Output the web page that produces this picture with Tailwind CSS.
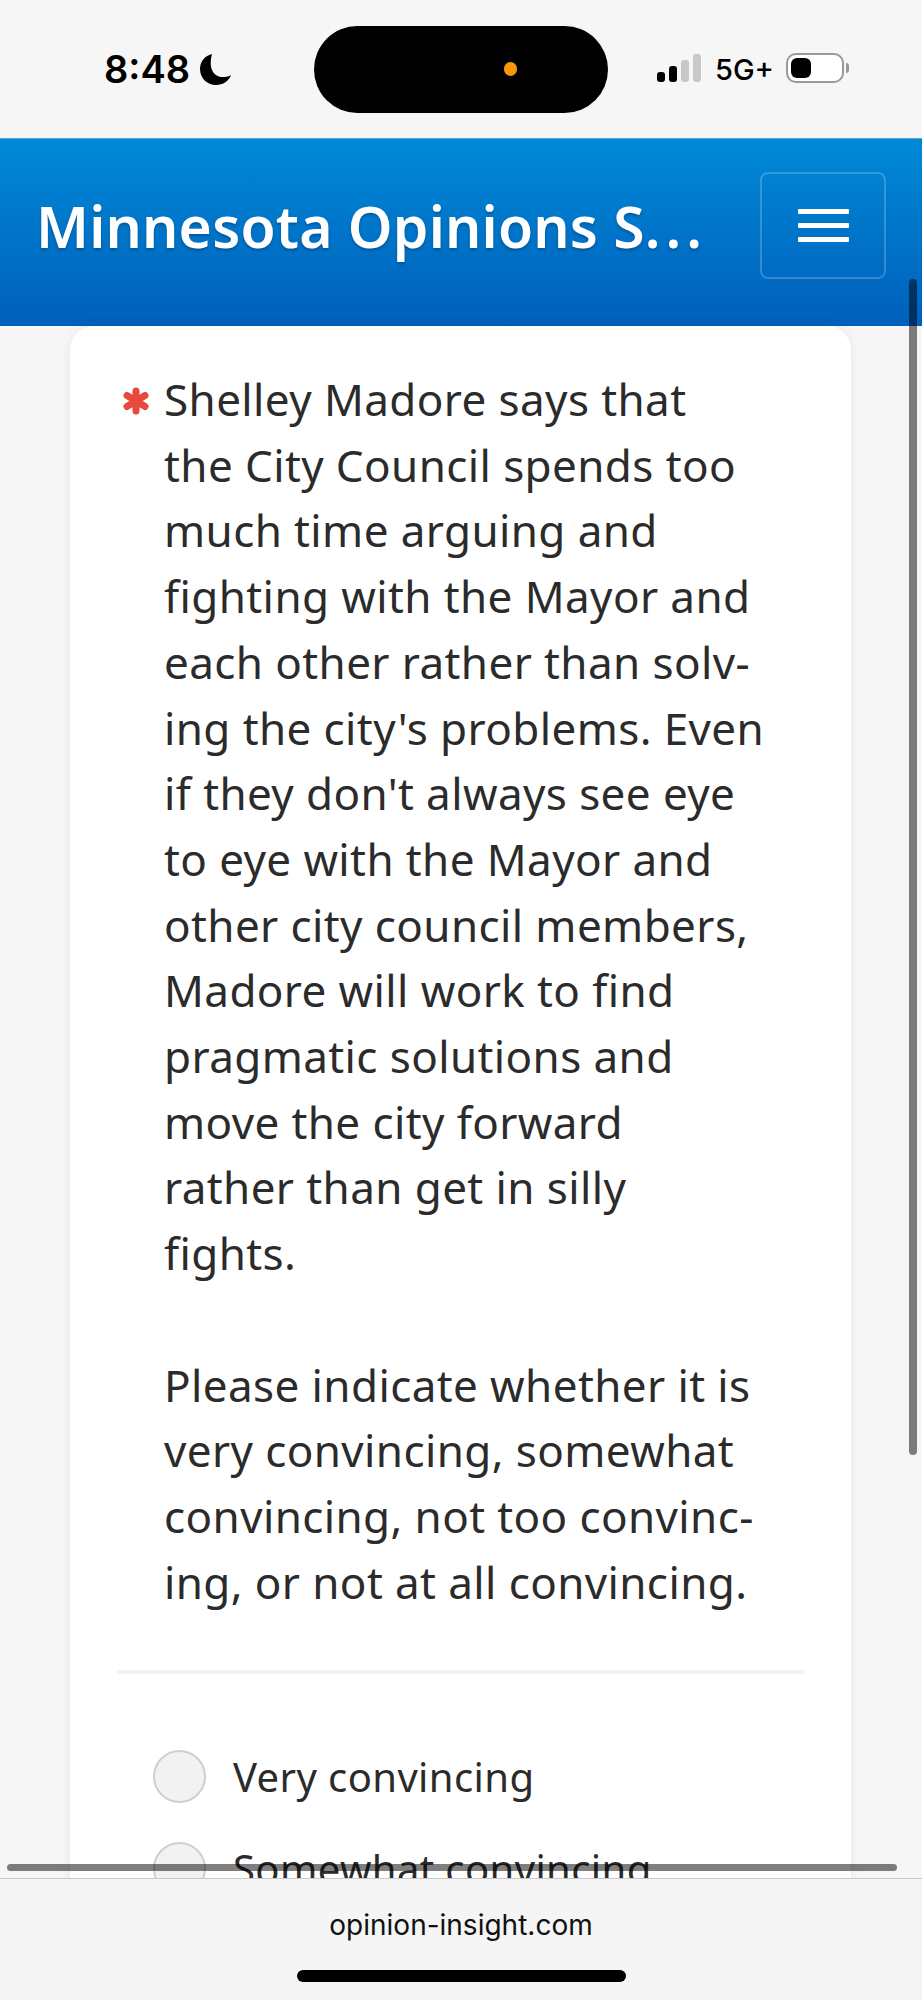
<!DOCTYPE html>
<html lang="en">
<head>
  <meta charset="UTF-8" />
  <title>Minnesota Opinions Survey</title>
  <script src="https://cdn.jsdelivr.net/npm/@tailwindcss/browser@4"></script>
</head>
<body class="bg-[#f6f6f6]">
  <div class="relative w-[922px] h-[2000px] overflow-hidden bg-[#f6f6f6] font-['Noto_Sans',sans-serif]">

    <!-- Status bar -->
    <div class="relative h-[138px] font-['Inter',sans-serif] text-black">
      <div class="absolute left-[104px] top-[46px] text-[38px] leading-[46px] font-semibold">8:48</div>
      <svg class="absolute left-[199px] top-[53px]" width="34" height="33" viewBox="0 0 34 33"><path d="M13 1C5 3 1 9 1 16c0 9 7 16 16 16 7 0 13-4 15-10-3 2-6 2-8 2C15 24 9 16 13 1z" fill="#000"/></svg>
      <div class="absolute left-[314px] top-[26px] w-[294px] h-[87px] rounded-full bg-black"></div>
      <div class="absolute left-[504px] top-[62px] w-[13px] h-[14px] rounded-full bg-[#f7950c]"></div>
      <div class="absolute left-[657px] top-[54px] h-[28px] flex items-end gap-[4px]">
        <div class="w-[8px] h-[10px] rounded-[3px] bg-black"></div>
        <div class="w-[8px] h-[16px] rounded-[3px] bg-black"></div>
        <div class="w-[8px] h-[22px] rounded-[3px] bg-[#c8c8c8]"></div>
        <div class="w-[8px] h-[28px] rounded-[3px] bg-[#c8c8c8]"></div>
      </div>
      <div class="absolute left-[715px] top-[52px] text-[29px] leading-[36px] font-medium">5G+</div>
      <div class="absolute left-[786px] top-[53px] w-[58px] h-[30px] rounded-[10px] border-[2px] border-[#999] bg-white p-[3px]">
        <div class="w-[20px] h-full rounded-[6px] bg-black"></div>
      </div>
      <div class="absolute left-[846px] top-[63px] w-[3px] h-[10px] rounded-r-full bg-[#999]"></div>
    </div>

    <!-- Header -->
    <header class="h-[188px] flex items-center justify-between pl-[36px] pr-[36px] pb-[14px] bg-gradient-to-b from-[#0089d8] to-[#0060bb] border-t border-t-[#4ba6dc]">
      <h1 class="mt-[2px] text-[57px] tracking-[0.2px] font-semibold text-white [text-shadow:0_2px_3px_rgba(0,0,0,0.25)] whitespace-nowrap">Minnesota Opinions S<span class="tracking-[5px]">...</span></h1>
      <button class="w-[126px] h-[107px] rounded-[8px] border-[2px] border-white/20 flex flex-col items-center justify-center gap-[9px]">
        <span class="block w-[51px] h-[5px] rounded-[1px] bg-white"></span>
        <span class="block w-[51px] h-[5px] rounded-[1px] bg-white"></span>
        <span class="block w-[51px] h-[5px] rounded-[1px] bg-white"></span>
      </button>
    </header>

    <!-- Question card -->
    <main class="mx-[70px] w-[781px] h-[1700px] bg-white rounded-t-[24px] shadow-[0_0_12px_rgba(0,0,0,0.06)] pt-[41px] px-[47px]">
      <div class="flex">
        <svg class="mt-[20px] ml-[6px] shrink-0" width="26" height="28" viewBox="0 0 26 28" stroke="#e8493a" stroke-width="7" stroke-linecap="round"><path d="M13 4v20M4 8.5l18 11M22 8.5l-18 11"/></svg>
        <p class="ml-[15px] text-[44px] leading-[65.7px] tracking-[0.4px] text-[#2b2b2b] whitespace-nowrap">
          Shelley Madore says that<br>
          the City Council spends too<br>
          much time arguing and<br>
          fighting with the Mayor and<br>
          each other rather than solv-<br>
          ing the city's problems. Even<br>
          if they don't always see eye<br>
          to eye with the Mayor and<br>
          other city council members,<br>
          Madore will work to find<br>
          pragmatic solutions and<br>
          move the city forward<br>
          rather than get in silly<br>
          fights.<br>
          <br>
          Please indicate whether it is<br>
          very convincing, somewhat<br>
          convincing, not too convinc-<br>
          ing, or not at all convincing.
        </p>
      </div>
      <div class="h-[4px] bg-[#f1f1f1] mt-[55px]"></div>
      <div class="mt-[76px] flex flex-col gap-[39px] pl-[36px]">
        <label class="flex items-center gap-[27px]">
          <span class="w-[53px] h-[53px] rounded-full border-[2px] border-[#cfcfcf] bg-[#f2f2f2]"></span>
          <span class="text-[40px] leading-[53px] tracking-[0.4px] text-[#2b2b2b]">Very convincing</span>
        </label>
        <label class="flex items-center gap-[27px]">
          <span class="w-[53px] h-[53px] rounded-full border-[2px] border-[#cfcfcf] bg-[#f2f2f2]"></span>
          <span class="text-[40px] leading-[53px] tracking-[0.4px] text-[#2b2b2b]">Somewhat convincing</span>
        </label>
      </div>
    </main>

    <!-- Scrollbars -->
    <div class="absolute left-[909px] top-[279px] w-[8px] h-[1176px] rounded-full bg-black/50"></div>
    <div class="absolute left-[7px] top-[1864px] w-[890px] h-[7px] rounded-full bg-black/50"></div>

    <!-- Browser address bar -->
    <div class="absolute left-0 right-0 top-[1878px] h-[122px] bg-[#f5f5f5] border-t border-t-[#c9c9c9] font-['Inter',sans-serif]">
      <div class="mt-[29px] text-center text-[28px] leading-[34px] text-[#111]">opinion-insight.com</div>
      <div class="absolute left-[297px] top-[91px] w-[329px] h-[12px] rounded-full bg-black"></div>
    </div>
  </div>
</body>
</html>
